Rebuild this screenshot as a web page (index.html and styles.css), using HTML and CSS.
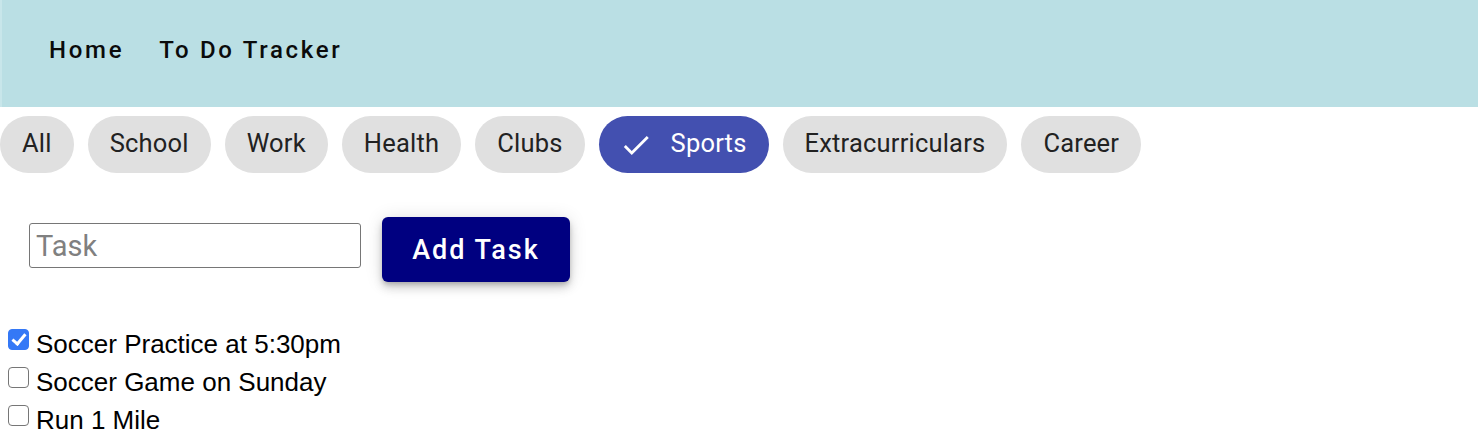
FILE: index.html
```html
<!DOCTYPE html>
<html>
<head>
<meta charset="utf-8">
<link rel="stylesheet" href="styles.css">
</head>
<body>
<header class="appbar">
  <nav class="nav">
    <a class="nav-link">Home</a>
    <a class="nav-link">To Do Tracker</a>
  </nav>
</header>
<div class="chips">
  <span class="chip">All</span>
  <span class="chip">School</span>
  <span class="chip">Work</span>
  <span class="chip">Health</span>
  <span class="chip">Clubs</span>
  <span class="chip chip-active"><svg class="chip-icon" viewBox="0 0 24 24"><path d="M9 16.17 4.83 12l-1.42 1.41L9 19 21 7l-1.41-1.41z" fill="#fff"/></svg>Sports</span>
  <span class="chip">Extracurriculars</span>
  <span class="chip">Career</span>
</div>
<form class="add-form">
  <input class="task-input" type="text" placeholder="Task">
  <button class="add-btn" type="button">Add Task</button>
</form>
<ul class="tasks">
  <li class="task"><input class="cb" type="checkbox" checked><span>Soccer Practice at 5:30pm</span></li>
  <li class="task"><input class="cb" type="checkbox"><span>Soccer Game on Sunday</span></li>
  <li class="task"><input class="cb" type="checkbox"><span>Run 1 Mile</span></li>
</ul>
</body>
</html>
```
FILE: styles.css
```css
html, body {
  margin: 0;
  padding: 0;
  background: #fff;
  font-family: Roboto, "Liberation Sans", sans-serif;
}
.appbar {
  background: #badfe4;
  height: 107px;
  display: flex;
  align-items: center;
  border-left: 2px solid #c8e6ea;
  box-sizing: border-box;
}
.nav {
  display: flex;
  gap: 35px;
  padding-left: 47px;
  padding-bottom: 7px;
}
.nav-link {
  font-size: 24px;
  font-weight: 500;
  letter-spacing: 2.7px;
  color: #0b0b0b;
}
.chips {
  display: flex;
  gap: 14px;
  margin-top: 9px;
  height: 57px;
}
.chip {
  display: inline-flex;
  align-items: center;
  height: 57px;
  padding: 0 22px 3px;
  border-radius: 29px;
  background: #e0e0e0;
  color: #222;
  font-size: 25.5px;
  letter-spacing: 0.2px;
  box-sizing: border-box;
}
.chip-active {
  background: #4350b0;
  color: #fff;
  padding-left: 20px;
  padding-right: 22px;
}
.chip-icon {
  width: 34px;
  height: 34px;
  margin: 3px 18px 0 0;
}
.add-form {
  display: flex;
  align-items: flex-start;
  gap: 21px;
  margin: 44px 0 0 29px;
}
.task-input {
  width: 332px;
  height: 45px;
  margin-top: 6px;
  box-sizing: border-box;
  border: 1px solid #767676;
  border-radius: 3px;
  font-size: 29px;
  font-family: Roboto, sans-serif;
  padding: 0 6px;
  color: #333;
}
.task-input::placeholder {
  color: #808080;
}
.add-btn {
  width: 188px;
  height: 65px;
  background: #000080;
  color: #fff;
  border: none;
  border-radius: 6px;
  font-family: Roboto, sans-serif;
  font-size: 27px;
  font-weight: 500;
  letter-spacing: 2px;
  box-shadow: 0 3px 5px -1px rgba(0,0,0,0.2), 0 6px 10px 0 rgba(0,0,0,0.14), 0 1px 18px 0 rgba(0,0,0,0.12);
}
.tasks {
  list-style: none;
  margin: 43px 0 0 8px;
  padding: 0;
}
.task {
  display: flex;
  align-items: center;
  height: 38px;
  font-family: "Liberation Sans", Arial, sans-serif;
  font-size: 26px;
  color: #000;
}
.cb {
  appearance: none;
  -webkit-appearance: none;
  width: 21px;
  height: 21px;
  margin: 0 7px 10px 0;
  border: 1.5px solid #767676;
  border-radius: 4px;
  background: #fff;
  box-sizing: border-box;
  position: relative;
}
.cb:checked {
  background: #3478f6;
  border-color: #3478f6;
}
.cb:checked::after {
  content: "";
  position: absolute;
  left: 6px;
  top: 1px;
  width: 5px;
  height: 11px;
  border: solid #fff;
  border-width: 0 3px 3px 0;
  transform: rotate(40deg);
}
```
